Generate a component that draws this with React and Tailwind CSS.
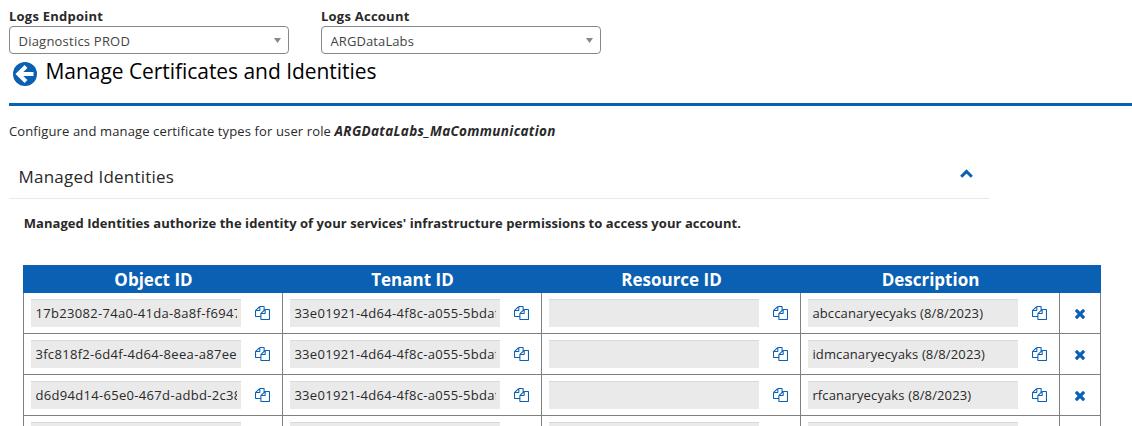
const ROWS = [
  ['17b23082-74a0-41da-8a8f-f6947', '33e01921-4d64-4f8c-a055-5bdaf', '', 'abccanaryecyaks (8/8/2023)'],
  ['3fc818f2-6d4f-4d64-8eea-a87ee2', '33e01921-4d64-4f8c-a055-5bdaf', '', 'idmcanaryecyaks (8/8/2023)'],
  ['d6d94d14-65e0-467d-adbd-2c38', '33e01921-4d64-4f8c-a055-5bdaf', '', 'rfcanaryecyaks (8/8/2023)'],
  ['', '', '', ''],
];
const HEADERS = ['Object ID', 'Tenant ID', 'Resource ID', 'Description'];
const SPACING = ['tracking-[0.32px]', 'tracking-[0.3px]', 'tracking-normal', 'tracking-[0.13px]'];

function CopyIcon() {
  return (
    <svg viewBox="0 0 1792 1792" preserveAspectRatio="none" className="h-[14px] w-[15px] shrink-0 fill-[#0a60b2]">
      <path d="M1696 384q40 0 68 28t28 68v1216q0 40-28 68t-68 28h-960q-40 0-68-28t-28-68v-288h-544q-40 0-68-28t-28-68v-672q0-40 20-88t48-76l408-408q28-28 76-48t88-20h416q40 0 68 28t28 68v328q68-40 128-40h416zm-544 213l-299 299h299v-299zm-640-384l-299 299h299v-299zm196 647l316-316v-416h-384v416q0 40-28 68t-68 28h-416v640h512v-256q0-40 20-88t48-76zm956 804v-1152h-384v416q0 40-28 68t-68 28h-416v640h896z" />
    </svg>
  );
}

function RemoveIcon() {
  return (
    <svg viewBox="302 302 1188 1188" className="size-[10px] fill-[#0a60b2]">
      <path d="M1490 1322q0 40-28 68l-136 136q-28 28-68 28t-68-28l-294-294-294 294q-28 28-68 28t-68-28l-136-136q-28-28-28-68t28-68l294-294-294-294q-28-28-28-68t28-68l136-136q28-28 68-28t68 28l294 294 294-294q28-28 68-28t68 28l136 136q28 28 28 68t-28 68l-294 294 294 294q28 28 28 68z" transform="translate(0 -64)" />
    </svg>
  );
}

function Select({ label, value, spacing }) {
  return (
    <div className="w-[280px]">
      <div className="h-[19px] text-[13px] leading-[18px] font-bold tracking-[0.24px]">{label}</div>
      <div className="flex h-7 items-center justify-between rounded-[4px] border border-[#888] pr-[7px] pl-[8.5px]">
        <span className={`pt-px leading-[18px] text-[#444] ${spacing}`}>{value}</span>
        <svg viewBox="0 0 7 5" className="h-[5px] w-[7px] fill-[#888]">
          <path d="M0 0h7L3.5 5z" />
        </svg>
      </div>
    </div>
  );
}

export default function App() {
  return (
    <div className="h-[426px] overflow-hidden bg-white pt-[7px] pl-[9px] font-['Open_Sans','Noto_Sans',sans-serif] text-[13px] whitespace-nowrap text-[#292929]">
      <div className="flex gap-8">
        <Select label="Logs Endpoint" value="Diagnostics PROD" spacing="tracking-[0.22px]" />
        <Select label="Logs Account" value="ARGDataLabs" spacing="tracking-[0.1px]" />
      </div>

      <div className="flex h-[49px] pl-[3.5px]">
        <svg viewBox="0 0 24 24" className="mt-2 size-6">
          <circle cx="12" cy="12" r="12" fill="#0a60b2" />
          <path d="M13 4.5L5.3 12l7.7 7.5M6 12h14.5" fill="none" stroke="#fff" strokeWidth="4" />
        </svg>
        <h1 className="ml-[9px] pt-[3px] text-[21px] leading-[28px] tracking-[-0.05px] text-black">Manage Certificates and Identities</h1>
      </div>
      <div className="h-[3px] bg-[#0a60b2]" />

      <p className="mt-4 h-[18px] leading-[18px]">
        <span className="tracking-[0.13px]">Configure and manage certificate types for user role </span>
        <span className="text-[13.5px] font-bold tracking-[0.32px] italic">ARGDataLabs_MaCommunication</span>
      </p>

      <div className="mt-[14px] flex h-[45px] w-[980px] items-center justify-between border-b border-[#e9e9e9] pr-4 pl-[9.5px]">
        <h2 className="pt-0.5 text-[17px] leading-6 tracking-[0.22px]">Managed Identities</h2>
        <svg viewBox="0 0 13 9" className="mb-[5px] h-[9px] w-[13px]">
          <path d="M1.2 7.7L6.5 2.4l5.3 5.3" fill="none" stroke="#0a60b2" strokeWidth="3" />
        </svg>
      </div>

      <div className="pl-[14px]">
        <p className="mt-[15px] h-[19px] pl-[0.7px] leading-[18px] font-bold tracking-[0.05px]">
          Managed Identities authorize the identity of your services' infrastructure permissions to access your account.
        </p>

        <div className="mt-8 w-[1078px]">
          <div className="grid h-7 grid-cols-[repeat(4,259px)_1fr] bg-[#0a60b2] text-center text-[17px] leading-[30px] font-bold text-white">
            {HEADERS.map((h) => (
              <div key={h} className="pl-0.5">{h}</div>
            ))}
          </div>
          {ROWS.map((row, r) => (
            <div key={r} className="grid h-[41px] grid-cols-[repeat(4,259px)_1fr] border-r border-b border-[#808080]">
              {row.map((value, c) => (
                <div key={c} className="flex items-center border-l border-[#808080] pl-[7px]">
                  <div className="h-7 w-[210px] shrink-0 border-t border-[#d9d9d9] bg-[#eaeaea] px-1">
                    <div className={`h-[27px] overflow-hidden pl-[0.4px] leading-[26px] ${SPACING[c]}`}>{value}</div>
                  </div>
                  <div className="ml-[14px] flex"><CopyIcon /></div>
                </div>
              ))}
              <div className="flex items-center justify-center border-l border-[#808080] pt-px">
                <RemoveIcon />
              </div>
            </div>
          ))}
        </div>
      </div>
    </div>
  );
}
